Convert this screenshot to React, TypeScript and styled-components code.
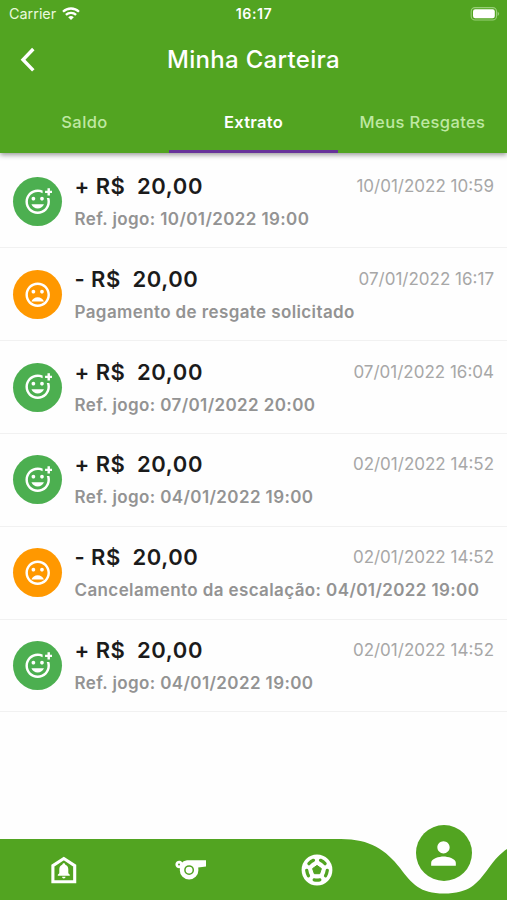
import React from "react";
import styled, { createGlobalStyle } from "styled-components";
import { MdMoodBad, MdOutlineAddReaction, MdPerson } from "react-icons/md";

const GREEN = "#52a421";

const GlobalStyle = createGlobalStyle`
  * { box-sizing: border-box; }
  body {
    margin: 0;
    background: #fff;
    font-family: Inter, "Liberation Sans", sans-serif;
  }
`;

const Screen = styled.div`
  width: 507px;
  height: 900px;
  display: flex;
  flex-direction: column;
  overflow: hidden;
  background: #fefefe;
`;

const Header = styled.header`
  flex: none;
  height: 153px;
  display: flex;
  flex-direction: column;
  color: #fff;
  background: ${GREEN};
  box-shadow: 0 2px 5px rgba(0, 0, 0, 0.4);
`;

const StatusBar = styled.div`
  height: 27px;
  display: grid;
  grid-template-columns: 1fr auto 1fr;
  align-items: center;
  padding: 0 7px 0 9px;
`;

const Carrier = styled.div`
  display: flex;
  align-items: center;
  gap: 6px;
  font-size: 14.4px;
  color: #e9f9dd;
`;

const Clock = styled.time`
  padding-right: 1px;
  font-size: 14.2px;
  font-weight: 600;
  letter-spacing: 0.5px;
`;

const BatteryIcon = styled.svg`
  justify-self: end;
  display: block;
`;

const TitleBar = styled.div`
  height: 66px;
  display: grid;
  grid-template-columns: 56px 1fr 56px;
  align-items: center;
`;

const BackButton = styled.button`
  display: flex;
  justify-content: center;
  padding: 0;
  border: 0;
  background: none;
  color: #fff;
`;

const Title = styled.h1`
  margin: 0;
  text-align: center;
  font-size: 24px;
  line-height: 30px;
  font-weight: 500;
  letter-spacing: 0.3px;
`;

const Tabs = styled.nav`
  flex: 1;
  display: grid;
  grid-template-columns: repeat(3, 1fr);
`;

const Tab = styled.button<{ $active?: boolean }>`
  padding: 0;
  border: 0;
  border-bottom: 3px solid ${(p) => (p.$active ? "#673299" : "transparent")};
  background: none;
  font-family: inherit;
  font-size: 16.5px;
  font-weight: ${(p) => (p.$active ? 600 : 500)};
  letter-spacing: ${(p) => (p.$active ? "0.3px" : "0.4px")};
  white-space: nowrap;
  color: ${(p) => (p.$active ? "#fff" : "#bfe8a3")};
`;

const List = styled.ul`
  flex: 1;
  margin: 0;
  padding: 2.7px 0 0;
  list-style: none;
`;

const Row = styled.li`
  height: 92.8px;
  display: flex;
  align-items: center;
  gap: 12.5px;
  padding: 0 13px;
  border-bottom: 1px solid #f1f1f1;
`;

const Avatar = styled.div<{ $credit: boolean }>`
  flex: none;
  width: 49px;
  height: 49px;
  display: flex;
  align-items: center;
  justify-content: center;
  border-radius: 50%;
  color: #fff;
  background: ${(p) => (p.$credit ? "#4caf50" : "#ff9800")};
`;

const Details = styled.div`
  flex: 1;
  min-width: 0;
  display: flex;
  flex-direction: column;
  gap: 8px;
  padding-bottom: 1px;
`;

const TopLine = styled.div`
  display: flex;
  justify-content: space-between;
  align-items: center;
`;

const Amount = styled.strong`
  font-size: 22px;
  line-height: 28px;
  font-weight: 600;
  letter-spacing: 0.6px;
  word-spacing: -0.4px;
  white-space: pre;
  color: #1b1b1b;
`;

const When = styled.time`
  font-size: 17px;
  line-height: 24px;
  color: #a7a7a7;
`;

const Reference = styled.div`
  font-size: 17px;
  line-height: 22px;
  font-weight: 600;
  letter-spacing: 0.39px;
  white-space: nowrap;
  color: #939393;
`;

const BottomBar = styled.footer`
  flex: none;
  position: relative;
  height: 75px;
`;

const BarShape = styled.svg`
  position: absolute;
  left: 0;
  bottom: 0;
  display: block;
`;

const BarItems = styled.nav`
  position: relative;
  height: 75px;
  display: grid;
  grid-template-columns: repeat(4, 1fr);
  padding-top: 14px;
`;

const BarButton = styled.button<{ $raised?: boolean }>`
  justify-self: center;
  align-self: ${(p) => (p.$raised ? "start" : "center")};
  width: 56px;
  height: 56px;
  margin-top: ${(p) => (p.$raised ? "-14px" : "0")};
  display: flex;
  align-items: center;
  justify-content: center;
  padding: 0;
  border: 0;
  border-radius: 50%;
  color: #fff;
  background: ${(p) => (p.$raised ? GREEN : "none")};
`;

const HouseIcon = () => (
  <svg width="34" height="34" viewBox="-17 -17 34 34">
    <path d="M.8-11.500 11.700-4.400V11.700H-10.100V-4.400Z" fill="none" stroke="currentColor" strokeWidth="3.100" />
    <path
      d="M.8-6.700c.9 0 1.500.6 1.500 1.500 2.100.7 3 2.400 3 4.500v3.900l1.500 1.500v1.100H-5.200V4.700l1.500-1.500V-.7c0-2.100.9-3.800 3-4.500 0-.9.600-1.500 1.500-1.500zM-.9 6.700h3.400c0 1-.7 1.700-1.700 1.700S-.9 7.700-.9 6.700z"
      fill="currentColor"
    />
  </svg>
);

const WhistleIcon = () => (
  <svg width="34" height="34" viewBox="-17 -17 34 34">
    <path
      d="M-10.800-9.300c1.400 0 2.500.7 3.100 1.700C-6.100-9.200-3.700-9.700-1-9.700H16v6.200l-7.800 1.100C8.300-1.500 8.400-.7 8.400.2A9.300 9.300 0 0 1-10.200.2c0-.8.100-1.300.3-2-2.500.4-4.700-1.200-4.700-3.600 0-2.300 1.700-3.900 3.800-3.900z"
      fill="currentColor"
    />
    <circle cx="-.9" cy=".1" r="4.200" fill="none" stroke={GREEN} strokeWidth="1.500" />
    <circle cx="-11" cy="-5.400" r="1" fill={GREEN} />
  </svg>
);

const BallIcon = () => (
  <svg width="34" height="34" viewBox="-17 -17 34 34">
    <circle r="15.400" fill="currentColor" />
    <path
      d="M0-4.600 4.400-1.400 2.700 3.700H-2.700L-4.400-1.400Z"
      fill={GREEN}
      stroke={GREEN}
      strokeWidth="1"
      strokeLinejoin="round"
    />
    {[0, 72, 144, 216, 288].map((angle) => (
      <path
        key={angle}
        transform={`rotate(${angle})`}
        d="M-2.800 9.900Q0 10.400 2.800 9.900"
        fill="none"
        stroke={GREEN}
        strokeWidth="3.300"
        strokeLinecap="round"
      />
    ))}
  </svg>
);

type Entry = { credit: boolean; when: string; text: string };

const entries: Entry[] = [
  { credit: true, when: "10/01/2022 10:59", text: "Ref. jogo: 10/01/2022 19:00" },
  { credit: false, when: "07/01/2022 16:17", text: "Pagamento de resgate solicitado" },
  { credit: true, when: "07/01/2022 16:04", text: "Ref. jogo: 07/01/2022 20:00" },
  { credit: true, when: "02/01/2022 14:52", text: "Ref. jogo: 04/01/2022 19:00" },
  { credit: false, when: "02/01/2022 14:52", text: "Cancelamento da escalação: 04/01/2022 19:00" },
  { credit: true, when: "02/01/2022 14:52", text: "Ref. jogo: 04/01/2022 19:00" },
];

export default function App() {
  return (
    <Screen>
      <GlobalStyle />
      <Header>
        <StatusBar>
          <Carrier>
            Carrier
            <svg width="18" height="14" viewBox="0 0 18 14" fill="none" stroke="#fff" strokeWidth="2.3">
              <path d="M1 4.800a11.4 11.4 0 0 1 16 0" />
              <path d="M3.9 7.900a7.3 7.3 0 0 1 10.2 0" />
              <path d="M9 13.100 6.200 10.300a4 4 0 0 1 5.600 0z" fill="#fff" stroke="none" />
            </svg>
          </Carrier>
          <Clock>16:17</Clock>
          <BatteryIcon width="30" height="14" viewBox="0 0 30 14">
            <rect x="1.200" y=".6" width="25.300" height="12.400" rx="3.800" fill="none" stroke="#98cf78" strokeWidth="1.100" />
            <rect x="3" y="2.300" width="21.800" height="9" rx="2.200" fill="#fff" />
            <path d="M27.600 4.500q3 2.300 0 4.600z" fill="#98cf78" />
          </BatteryIcon>
        </StatusBar>
        <TitleBar>
          <BackButton aria-label="Voltar">
            <svg width="18" height="26" viewBox="0 0 18 26" fill="none" stroke="currentColor" strokeWidth="3.4">
              <path d="M14.300 2 4 12.700l10.300 10.700" />
            </svg>
          </BackButton>
          <Title>Minha Carteira</Title>
        </TitleBar>
        <Tabs>
          <Tab>Saldo</Tab>
          <Tab $active>Extrato</Tab>
          <Tab>Meus Resgates</Tab>
        </Tabs>
      </Header>
      <List>
        {entries.map((e, i) => (
          <Row key={i}>
            <Avatar $credit={e.credit}>
              {e.credit ? <MdOutlineAddReaction size={29.4} /> : <MdMoodBad size={29.4} />}
            </Avatar>
            <Details>
              <TopLine>
                <Amount>{`${e.credit ? "+" : "-"} R$  20,00`}</Amount>
                <When>{e.when}</When>
              </TopLine>
              <Reference>{e.text}</Reference>
            </Details>
          </Row>
        ))}
      </List>
      <BottomBar>
        <BarShape width="507" height="62" viewBox="0 0 507 62">
          <path
            fill={GREEN}
            d="M0 1H341C370 1 386 12 400 30C412 46 420 55.500 444 55.500C469 55.500 477 46 488 31C495 21 501 15 507 11V62H0Z"
          />
        </BarShape>
        <BarItems>
          <BarButton aria-label="Início"><HouseIcon /></BarButton>
          <BarButton aria-label="Jogos"><WhistleIcon /></BarButton>
          <BarButton aria-label="Futebol"><BallIcon /></BarButton>
          <BarButton $raised aria-label="Perfil"><MdPerson size={37} /></BarButton>
        </BarItems>
      </BottomBar>
    </Screen>
  );
}
